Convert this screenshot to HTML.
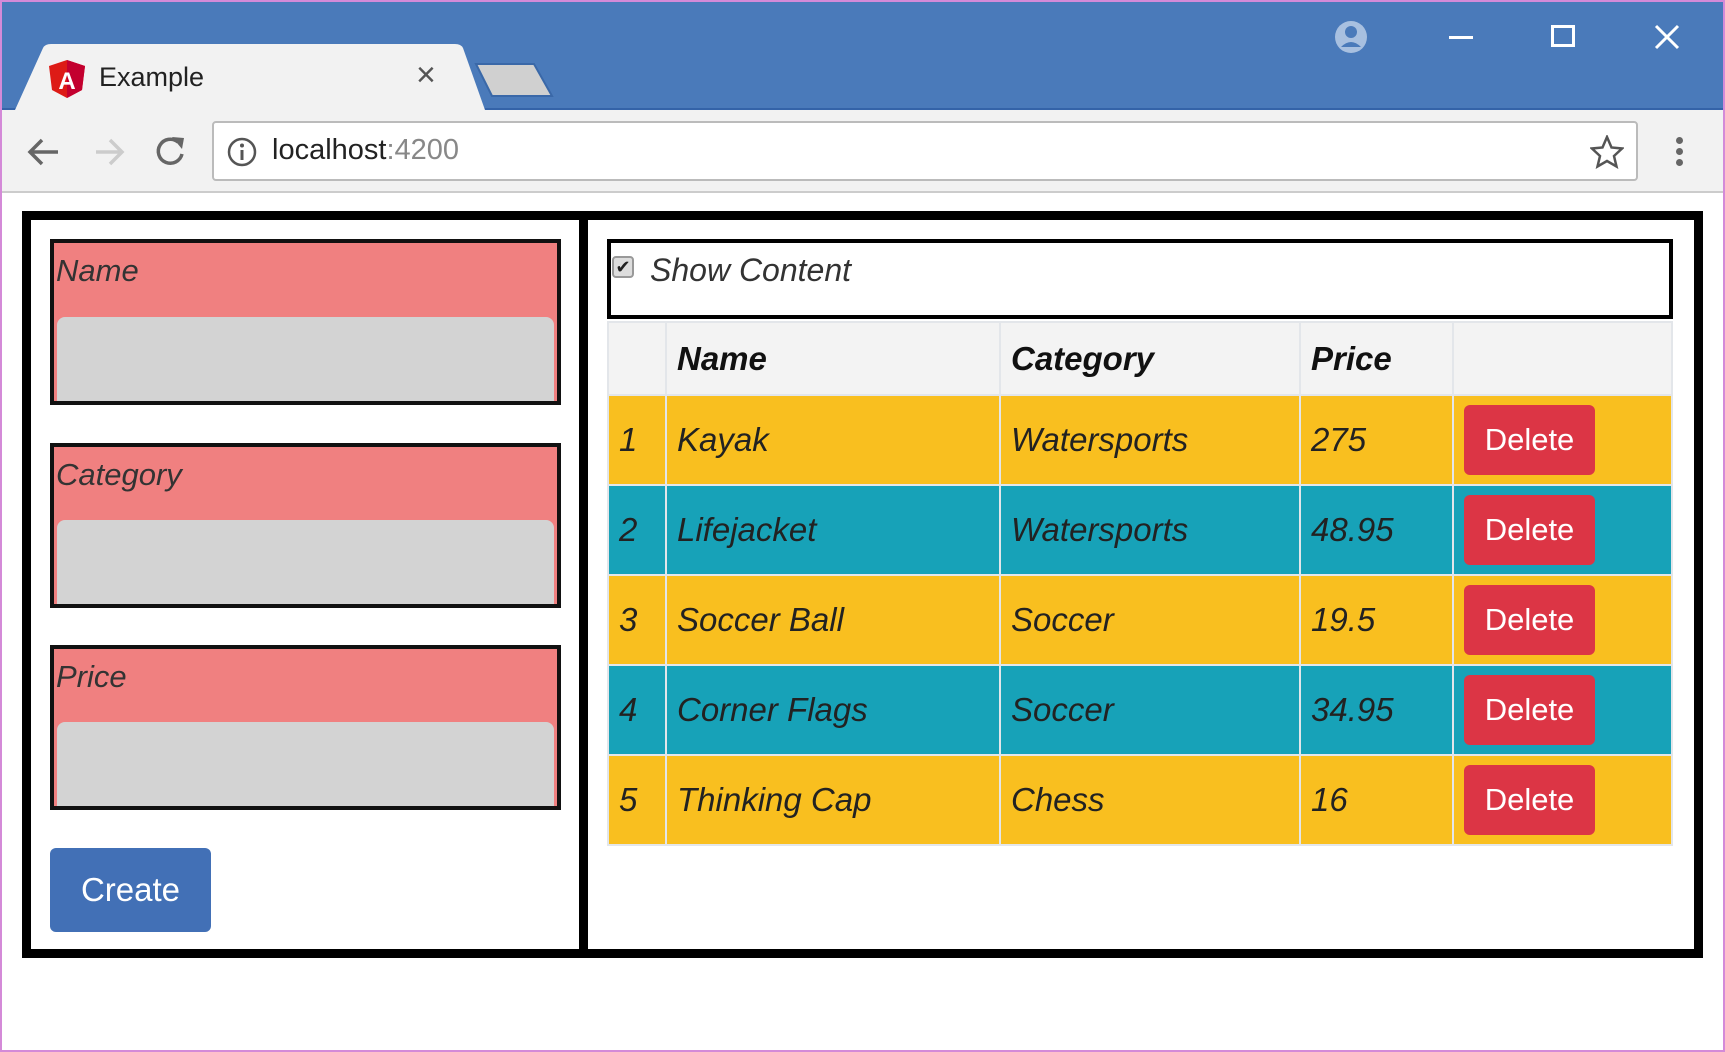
<!DOCTYPE html>
<html><head><style>
*{margin:0;padding:0;box-sizing:border-box}
body{width:1725px;height:1052px;position:relative;background:#fff;font-family:"Liberation Sans",sans-serif;overflow:hidden}
.a{position:absolute}
.lbl{font-style:italic;font-size:31px;color:#333;}
.fld{position:absolute;left:50px;width:511px;border:4px solid #111;background:#f08080}
.fld .lbl{position:absolute;left:2px;top:10px}
.fld .in{position:absolute;left:3px;right:3px;bottom:0;height:84px;background:#d3d3d3;border-radius:8px 8px 0 0}
td,th{border:2px solid #e3e6ea;font-size:33px;font-style:italic;text-align:left;padding-left:10px;color:#222}
th{font-weight:bold;background:#f3f3f3;color:#111;height:73px}
table{border-collapse:collapse;position:absolute;left:607px;top:321px;width:1066px}
tr.y td{background:#f9bf1f}
tr.t td{background:#17a2b8}
tr td{height:90px}
.del{display:inline-block;background:#dc3545;color:#fff;font-style:normal;font-size:31px;width:131px;height:70px;line-height:70px;text-align:center;border-radius:6px}
</style></head><body>
<div class="a" style="left:0;top:0;width:1725px;height:110px;background:#4a7aba;border-bottom:2px solid #3463a8"></div>
<div class="a" style="left:0;top:0;width:1725px;height:1052px;border:2px solid #d48ad8;pointer-events:none;z-index:5"></div>
<!-- tab -->
<svg class="a" style="left:15px;top:44px" width="470" height="70"><path d="M0 66 L28 4 Q30 0 36 0 L440 0 Q446 0 448 4 L470 66 Z" fill="#f2f2f2"/></svg>
<svg class="a" style="left:474px;top:62px" width="80" height="36"><path d="M2 2 L60 2 L78 34 L18 34 Z" fill="#d0d0d0" stroke="#3a68a8" stroke-width="2"/></svg>
<svg class="a" style="left:49px;top:60px" width="36" height="38"><path d="M18 0 L36 6 L33 30 L18 38 L3 30 L0 6Z" fill="#dd1b16"/><path d="M18 0 L36 6 L33 30 L18 38Z" fill="#c3002f"/><text x="18" y="29" fill="#fff" font-size="24" font-weight="bold" text-anchor="middle" font-family="Liberation Sans">A</text></svg>
<div class="a" style="left:99px;top:62px;font-size:27px;color:#222">Example</div>
<div class="a" style="left:416px;top:56px;font-size:34px;color:#555">×</div>
<!-- window controls -->
<svg class="a" style="left:1334px;top:20px" width="34" height="34"><circle cx="17" cy="17" r="16" fill="#a8c0e0"/><circle cx="17" cy="12" r="6" fill="#4a7aba"/><path d="M7 27 Q17 17 27 27" fill="#4a7aba"/></svg>
<div class="a" style="left:1449px;top:36px;width:24px;height:3px;background:#fff"></div>
<div class="a" style="left:1551px;top:25px;width:24px;height:22px;border:3px solid #fff"></div>
<svg class="a" style="left:1654px;top:24px" width="26" height="26"><path d="M2 2L24 24M24 2L2 24" stroke="#fff" stroke-width="3"/></svg>
<!-- toolbar -->
<div class="a" style="left:0;top:110px;width:1725px;height:83px;background:#f2f2f2;border-bottom:2px solid #ccc"></div>
<svg class="a" style="left:26px;top:134px" width="180" height="36"><path d="M32 18H4M16 6L4 18L16 30" stroke="#666" stroke-width="3.5" fill="none"/><path d="M70 18H96M84 6L96 18L84 30" stroke="#ccc" stroke-width="3.5" fill="none"/><path d="M152 8 A12 12 0 1 0 156 20" stroke="#666" stroke-width="3.5" fill="none"/><path d="M146 3 L158 4 L156 15Z" fill="#666"/></svg>
<div class="a" style="left:212px;top:121px;width:1426px;height:60px;background:#fff;border:2px solid #bbb;border-radius:4px"></div>
<svg class="a" style="left:226px;top:136px" width="32" height="32"><circle cx="16" cy="16" r="13" stroke="#555" stroke-width="2.5" fill="none"/><path d="M16 14V24" stroke="#555" stroke-width="3"/><circle cx="16" cy="9.5" r="2" fill="#555"/></svg>
<div class="a" style="left:272px;top:134px;font-size:29px;color:#222">localhost<span style="color:#888">:4200</span></div>
<svg class="a" style="left:1590px;top:135px" width="34" height="34"><path d="M17 2L21.5 12.5L32 13.5L24 21L26.5 31.5L17 26L7.5 31.5L10 21L2 13.5L12.5 12.5Z" stroke="#555" stroke-width="2.5" fill="none"/></svg>
<div class="a" style="left:1676px;top:137px;width:7px;height:7px;border-radius:50%;background:#666;box-shadow:0 11px 0 #666,0 22px 0 #666"></div>
<!-- content -->
<div class="a" style="left:22px;top:211px;width:1681px;height:747px;border:9px solid #000"></div>
<div class="a" style="left:579px;top:211px;width:9px;height:747px;background:#000"></div>
<div class="fld" style="top:239px;height:166px"><div class="lbl">Name</div><div class="in"></div></div>
<div class="fld" style="top:443px;height:165px"><div class="lbl">Category</div><div class="in"></div></div>
<div class="fld" style="top:645px;height:165px"><div class="lbl">Price</div><div class="in"></div></div>
<div class="a" style="left:50px;top:848px;width:161px;height:84px;background:#4270b6;border-radius:6px;color:#fff;font-size:33px;text-align:center;line-height:84px">Create</div>
<div class="a" style="left:607px;top:239px;width:1066px;height:80px;border:4px solid #000"></div>
<div class="a" style="left:612px;top:256px;width:22px;height:22px;border:2px solid #999;border-radius:4px;background:#ddd;color:#222;font-size:18px;line-height:18px;text-align:center">✔</div>
<div class="a lbl" style="left:650px;top:252px;font-size:32px">Show Content</div>
<table>
<tr><th style="width:58px"></th><th style="width:334px">Name</th><th style="width:300px">Category</th><th style="width:153px">Price</th><th></th></tr>
<tr class="y"><td>1</td><td>Kayak</td><td>Watersports</td><td>275</td><td><span class="del">Delete</span></td></tr>
<tr class="t"><td>2</td><td>Lifejacket</td><td>Watersports</td><td>48.95</td><td><span class="del">Delete</span></td></tr>
<tr class="y"><td>3</td><td>Soccer Ball</td><td>Soccer</td><td>19.5</td><td><span class="del">Delete</span></td></tr>
<tr class="t"><td>4</td><td>Corner Flags</td><td>Soccer</td><td>34.95</td><td><span class="del">Delete</span></td></tr>
<tr class="y"><td>5</td><td>Thinking Cap</td><td>Chess</td><td>16</td><td><span class="del">Delete</span></td></tr>
</table>
</body></html>
